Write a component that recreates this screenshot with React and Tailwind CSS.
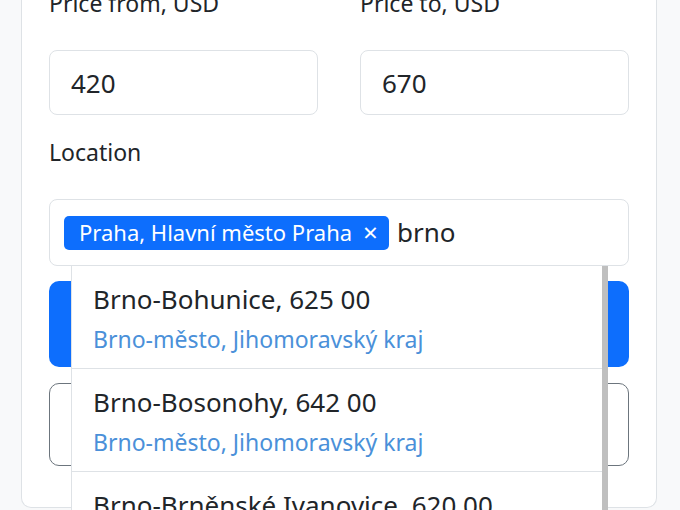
import { useState } from "react";

const results = [
  { name: "Brno-Bohunice, 625 00", region: "Brno-město, Jihomoravský kraj" },
  { name: "Brno-Bosonohy, 642 00", region: "Brno-město, Jihomoravský kraj" },
  { name: "Brno-Brněnské Ivanovice, 620 00", region: "Brno-město, Jihomoravský kraj" },
];

export default function App() {
  const [query, setQuery] = useState("brno");

  return (
    <div
      className="h-[510px] w-[680px] overflow-hidden bg-[#f8f9fa] text-[#212529]"
      style={{ fontFamily: '"Noto Sans", "Open Sans", sans-serif' }}
    >
      <div className="ml-[21px] -mt-[13px] w-[636px] h-[521px] bg-white border-x border-b border-[#dee2e6] rounded-b-[10px] px-[27px] flex flex-col">
        {/* Price */}
        <div className="grid grid-cols-2 gap-[42px]">
          <div>
            <label className="block text-[23px] leading-[33px]">Price from, USD</label>
            <input
              defaultValue="420"
              className="mt-[30px] block w-full h-[65px] border border-[#dee2e6] rounded-[8px] px-[21px] text-[26px] outline-none"
            />
          </div>
          <div>
            <label className="block text-[23px] leading-[33px]">Price to, USD</label>
            <input
              defaultValue="670"
              className="mt-[30px] block w-full h-[65px] border border-[#dee2e6] rounded-[8px] px-[21px] text-[26px] outline-none"
            />
          </div>
        </div>

        {/* Location */}
        <label className="block mt-[21px] text-[23px] leading-[33px]">Location</label>
        <div className="relative mt-[30px]">
          <div className="h-[67px] border border-[#dee2e6] rounded-[8px] pl-[14px] flex items-center gap-[8px]">
            <span className="h-[34px] bg-[#0d6efd] text-white rounded-[5px] pl-[15px] pr-[11px] flex items-center gap-[11px] text-[22px] whitespace-nowrap">
              Praha, Hlavní město Praha
              <span className="text-[26px] leading-none -mt-[2px]">×</span>
            </span>
            <input
              value={query}
              onChange={(e) => setQuery(e.target.value)}
              className="flex-1 text-[26px] outline-none min-w-0"
            />
          </div>

          {/* Dropdown */}
          <div className="absolute left-[22px] top-[67px] w-[537px] bg-white border-l border-[#dee2e6] border-r-[6px] border-r-[#bfbfbf] z-10">
            {results.map((r, i) => (
              <div
                key={r.name}
                className={"pl-[21px] pt-[18px] pb-[14px] " + (i < results.length - 1 ? "border-b border-[#dee2e6]" : "")}
              >
                <div className="text-[26px] leading-[30px] whitespace-nowrap">{r.name}</div>
                <div className="mt-[10px] text-[23px] leading-[30px] text-[#4a90d9] whitespace-nowrap">{r.region}</div>
              </div>
            ))}
          </div>
        </div>

        {/* Buttons */}
        <button className="mt-[15px] block w-full h-[86px] shrink-0 bg-[#0d6efd] text-white rounded-[10px] text-[26px]">
          Search
        </button>
        <button className="mt-[16px] block w-full h-[83px] shrink-0 border border-[#6c757d] text-[#6c757d] rounded-[10px] text-[26px]">
          Reset
        </button>
      </div>
    </div>
  );
}
